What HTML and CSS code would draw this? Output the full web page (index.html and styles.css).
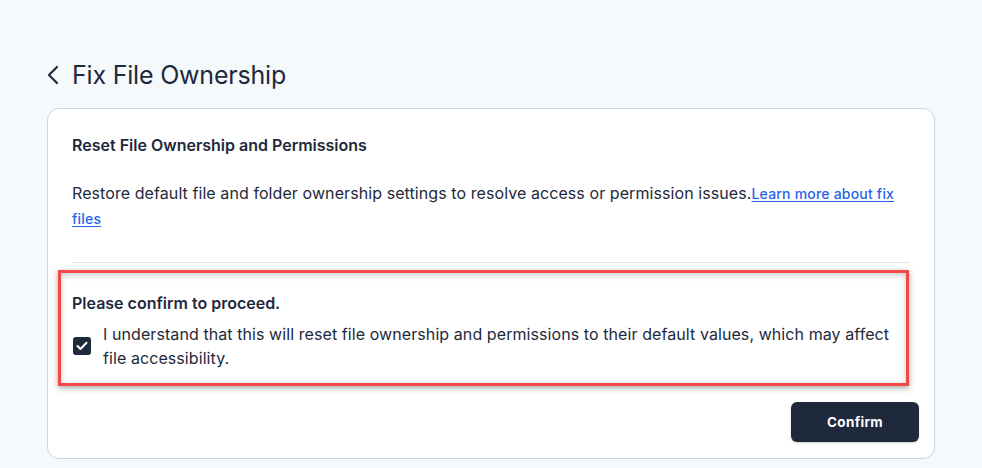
FILE: index.html
```html
<!DOCTYPE html>
<html lang="en">
<head>
<meta charset="utf-8">
<title>Fix File Ownership</title>
<link rel="stylesheet" href="styles.css">
</head>
<body>
<main class="page">
  <header class="page-head">
    <button class="back" aria-label="Back">
      <svg width="12" height="20" viewBox="0 0 12 20"><path d="M10 2 L2 10 L10 18" fill="none" stroke="#1e293b" stroke-width="2.2" stroke-linecap="round" stroke-linejoin="round"/></svg>
    </button>
    <h1 class="page-title">Fix File Ownership</h1>
  </header>
  <section class="card">
    <div class="card-body">
      <h2 class="card-title">Reset File Ownership and Permissions</h2>
      <p class="desc">Restore default file and folder ownership settings to resolve access or permission issues.<a class="link" href="#">Learn more about fix files</a></p>
      <hr class="divider">
      <div class="confirm-box">
        <div class="confirm-title">Please confirm to proceed.</div>
        <label class="check-row">
          <span class="checkbox">
            <svg width="12" height="10" viewBox="0 0 12 10"><path d="M1.5 5 L4.5 8 L10.5 1.8" fill="none" stroke="#fff" stroke-width="2" stroke-linecap="round" stroke-linejoin="round"/></svg>
          </span>
          <span class="check-text">I understand that this will reset file ownership and permissions to their default values, which may affect file accessibility.</span>
        </label>
      </div>
    </div>
    <div class="card-foot">
      <button class="btn">Confirm</button>
    </div>
  </section>
</main>
</body>
</html>
```

FILE: styles.css
```css
* { box-sizing: border-box; }
html, body { margin: 0; padding: 0; }
body {
  background: #f6f9fc;
  font-family: Inter, "Noto Sans", sans-serif;
  color: #1e293b;
  width: 982px;
  height: 468px;
  overflow: hidden;
}
.page {
  padding: 57px 0 0 47px;
  width: 935px;
}
.page-head {
  display: flex;
  align-items: center;
  height: 36px;
  margin-bottom: 15px;
}
.back {
  border: 0;
  background: none;
  padding: 0;
  margin: 0 11px 0 0;
  width: 14px;
  height: 20px;
  display: flex;
  align-items: center;
  justify-content: flex-start;
  cursor: pointer;
}
.page-title {
  margin: 0;
  font-size: 25px;
  font-weight: 400;
  letter-spacing: -0.2px;
  color: #1e293b;
  line-height: 36px;
}
.card {
  background: #fff;
  border: 1px solid #cfd4da;
  border-radius: 12px;
  width: 888px;
  height: 351px;
}
.card-body {
  padding: 24px 24px 0 24px;
}
.card-title {
  margin: 0;
  font-size: 16px;
  font-weight: 600;
  line-height: 24px;
  color: #1e293b;
}
.desc {
  margin: 24px 0 0;
  font-size: 16px;
  line-height: 24px;
  letter-spacing: 0.08px;
  color: #1e293b;
}
.link {
  color: #2563eb;
  font-size: 14px;
  font-weight: 500;
  letter-spacing: 0.2px;
  text-decoration: underline;
  text-underline-offset: 2px;
}
.divider {
  border: 0;
  border-top: 1px solid #e2e4e8;
  margin: 31px 0 7px;
}
.confirm-box {
  margin-left: -14px;
  margin-right: 1px;
  border: 3px solid #f64747;
  padding: 18px 2px 13px 11px;
  box-shadow: 0 2px 6px rgba(0,0,0,0.35), inset 0 2px 6px rgba(0,0,0,0.22);
}
.confirm-title {
  font-size: 16px;
  font-weight: 600;
  line-height: 24px;
  color: #1e293b;
}
.check-row {
  display: flex;
  align-items: center;
  margin-top: 7px;
}
.checkbox {
  flex: none;
  width: 18px;
  height: 18px;
  margin-left: 1px;
  margin-right: 12px;
  background: #1e293b;
  border-radius: 3px;
  display: flex;
  align-items: center;
  justify-content: center;
}
.check-text {
  font-size: 16px;
  line-height: 24px;
  letter-spacing: 0.08px;
  color: #1e293b;
}
.card-foot {
  display: flex;
  justify-content: flex-end;
  padding: 16px 15px 0 0;
}
.btn {
  width: 128px;
  height: 40px;
  border: 0;
  border-radius: 6px;
  background: #1e293b;
  color: #fff;
  font-family: Inter, "Noto Sans", sans-serif;
  font-size: 13.5px;
  font-weight: 700;
  letter-spacing: 0.3px;
  cursor: pointer;
  box-shadow: 0 1px 2px rgba(0,0,0,0.2);
}
```
